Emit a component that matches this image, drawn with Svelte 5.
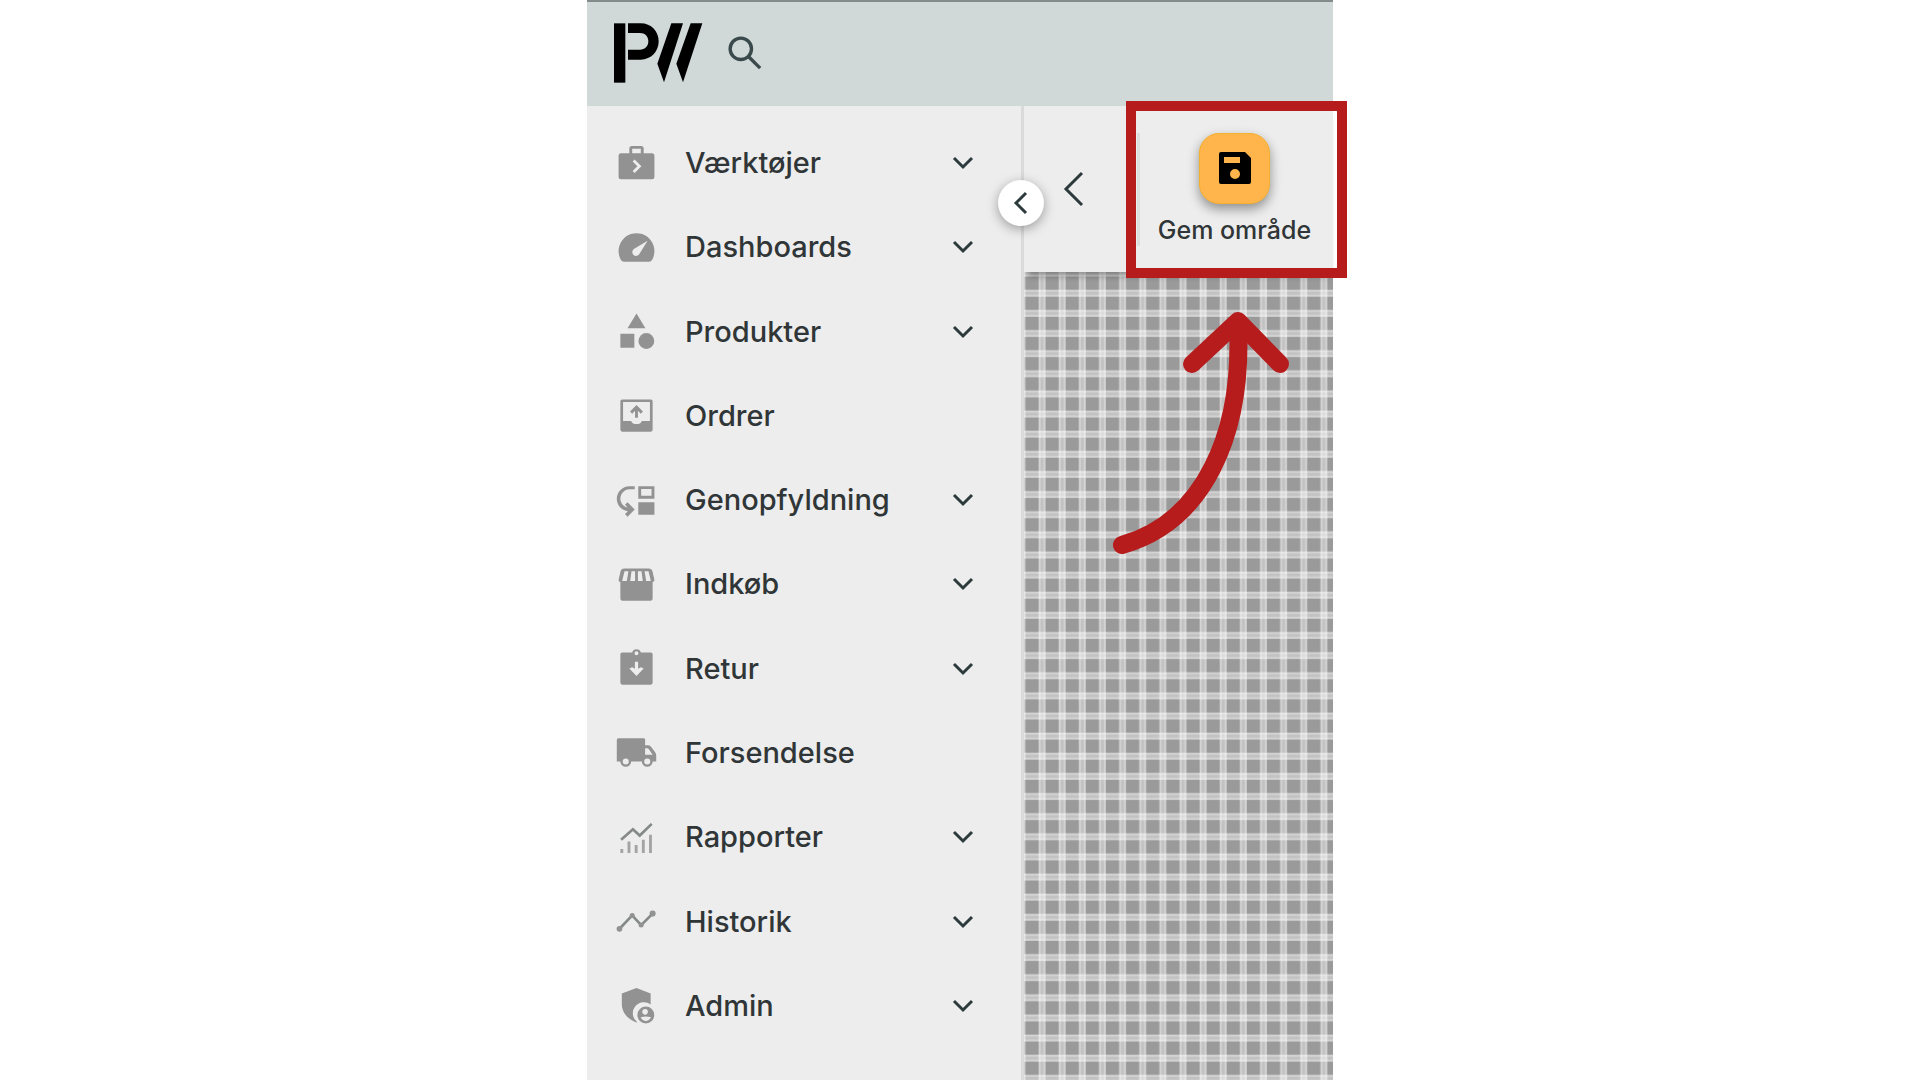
<script lang="ts">
    type MenuItem = { label: string; icon: string; expandable: boolean };

    const items: MenuItem[] = [
        { label: "Værktøjer", icon: "tools", expandable: true },
        { label: "Dashboards", icon: "gauge", expandable: true },
        { label: "Produkter", icon: "shapes", expandable: true },
        { label: "Ordrer", icon: "outbox", expandable: false },
        { label: "Genopfyldning", icon: "refill", expandable: true },
        { label: "Indkøb", icon: "store", expandable: true },
        { label: "Retur", icon: "return", expandable: true },
        { label: "Forsendelse", icon: "truck", expandable: false },
        { label: "Rapporter", icon: "report", expandable: true },
        { label: "Historik", icon: "history", expandable: true },
        { label: "Admin", icon: "shield", expandable: true },
    ];
</script>

{#snippet menuIcon(name: string)}
    <svg class="icon" viewBox="0 0 24 24" aria-hidden="true">
        {#if name === "tools"}
            <path fill-rule="evenodd" d="M8 6.3V3.6Q8 2.2 9.4 2.2h5.2Q16 2.2 16 3.6v2.7h4.6Q22 6.3 22 7.7v11.7q0 1.4-1.4 1.4H3.4Q2 20.8 2 19.4V7.7q0-1.4 1.4-1.4zM9.6 6.3h4.8V3.8H9.6z" />
            <path class="cut" d="M10.4 10.3l3.2 3.2-3.2 3.2" />
        {:else if name === "gauge"}
            <path fill-rule="evenodd" d="M12 4A10 10 0 0 0 3.34 19q.5 1 1.7 1h13.92q1.2 0 1.7-1A10 10 0 0 0 12 4zM18.2 8.2l-4.6 7.4a2.1 2.1 0 1 1-3.1-2.7z" />
        {:else if name === "shapes"}
            <path d="M12 2l-5 8.2h10zM3 13.2h7.8V21H3z" />
            <circle cx="17.5" cy="17.3" r="4.4" />
        {:else if name === "outbox"}
            <path fill-rule="evenodd" d="M4 3h16q1 0 1 1v16q0 1-1 1H4q-1 0-1-1V4q0-1 1-1zM4.5 4.5V15H9q.8 1.8 3 1.8t3-1.8h4.5V4.5z" />
            <path d="M11.2 13.2V9.4L9.6 11 8.4 9.8 12 6.2l3.6 3.6-1.2 1.2-1.6-1.6v3.8z" />
        {:else if name === "refill"}
            <path d="M3 11c0 2.45 1.76 4.47 4.08 4.91l-1.49-1.49L7 13l4 4.01L7 21l-1.41-1.41 1.58-1.58v-.06C3.7 17.54 1 14.58 1 11c0-3.87 3.13-7 7-7h3v1.7H8c-2.76 0-5 2.54-5 5.3z" />
            <path fill-rule="evenodd" d="M22 11V4h-9v7zm-1.6-1.6h-5.8V5.6h5.8zM13 13h9v7h-9z" />
        {:else if name === "store"}
            <path fill-rule="evenodd" d="M21.9 8.89l-1.05-4.37C20.63 3.62 19.85 3 18.94 3H5.05c-.9 0-1.69.63-1.9 1.52L2.1 8.89c-.24 1.02.1 1.61.9 1.61V20q0 1 1 1h16q1 0 1-1v-9.5c.8 0 1.15-.6.9-1.61zM18.7 4.6l1.3 5.4h-2.6L16.5 4.6zM12.8 4.6h2l.7 5.4h-2.7zM9.2 4.6h2V10H8.5zM5.3 4.6h2.2L6.6 10H4z" />
        {:else if name === "return"}
            <path fill-rule="evenodd" d="M20 3h-5.6a2.5 2.5 0 0 0-4.8 0H4Q3 3 3 4v16q0 1 1 1h16q1 0 1-1V4q0-1-1-1zM12 2.4a1.1 1.1 0 1 1 0 2.2 1.1 1.1 0 0 1 0-2.2zM11.1 8.2h1.8v4l1.5-.9 1.6.7-4 4.2L8 12l1.6-.7 1.5.9z" />
        {:else if name === "truck"}
            <path fill-rule="evenodd" d="M2 4h14q.8 0 .8.8V8h1.6q1 0 1.7.8l2.3 3.1q.6.8.6 1.8V17h-2a3 3 0 0 1-6 0H9a3 3 0 0 1-6 0H1V5q0-1 1-1zM16.8 9.6v3.6h4.2l-2.1-3q-.4-.6-1-.6zM6 15.3a1.7 1.7 0 1 0 0 3.4 1.7 1.7 0 0 0 0-3.4zM18 15.3a1.7 1.7 0 1 0 0 3.4 1.7 1.7 0 0 0 0-3.4z" />
        {:else if name === "report"}
            <path class="line" d="M3.4 13.3L10 7.4l3.8 3.5 6.7-6.5" />
            <path class="bars" d="M3.8 20.6v-2.2M7.8 20.6v-6.3M11.8 20.6v-4.4M15.8 20.6v-7.4M19.8 20.6V10.4" />
        {:else if name === "history"}
            <path class="line" d="M2.4 16.2l7.2-7.6 5 5.4 6.4-6.4" />
            <circle cx="2.5" cy="16.1" r="1.6" />
            <circle cx="9.6" cy="8.6" r="1.4" />
            <circle cx="14.6" cy="14" r="1.4" />
            <circle cx="21" cy="7.6" r="1.7" />
        {:else if name === "shield"}
            <path d="M12 2.3l7.9 3v6.1a5.9 5.9 0 0 0-7.5 9.9l-.4.2c-4.8-1.6-8.2-5.8-8.2-10.4V5.3z" />
            <path fill-rule="evenodd" d="M17.2 12.6a4.7 4.7 0 1 1 0 9.4 4.7 4.7 0 0 1 0-9.4zM17.2 14a1.6 1.6 0 1 0 0 3.1 1.6 1.6 0 0 0 0-3.1zM14.3 18.6q1.2 2.1 2.9 2.1t2.9-2.1q-2.9-1-5.8 0z" />
        {/if}
    </svg>
{/snippet}

<div class="stage">
    <header class="topbar">
        <a class="logo" href="#home" aria-label="PW">
            <svg viewBox="100 70 268 180" aria-hidden="true">
                <path d="M102 71h34v178h-34z" />
                <path d="M144 71h38c32 0 54 24 54 54s-22 55-54 55h-38v-30h36c15 0 25-10 25-25s-10-25-25-25h-36z" />
                <path d="M274 71h35l-57 177-20-56zM332 71h35l-58 177-20-56z" />
            </svg>
        </a>
        <button class="search" aria-label="Søg">
            <svg viewBox="0 0 24 24" aria-hidden="true">
                <circle cx="9.5" cy="9.5" r="5.7" />
                <path d="M13.7 13.7l6.1 6.1" />
            </svg>
        </button>
    </header>

    <div class="body">
        <aside class="sidebar">
            <nav>
                {#each items as item}
                    <button class="item" aria-expanded={item.expandable ? false : undefined}>
                        {@render menuIcon(item.icon)}
                        <span class="label">{item.label}</span>
                        {#if item.expandable}
                            <svg class="chevron" viewBox="0 0 24 24" aria-hidden="true">
                                <path d="M3 7l9 9 9-9" />
                            </svg>
                        {/if}
                    </button>
                {/each}
            </nav>
            <button class="collapse" aria-label="Skjul menu">
                <svg viewBox="0 0 24 24" aria-hidden="true">
                    <path d="M17 2L7 12l10 10" />
                </svg>
            </button>
        </aside>

        <main>
            <div class="toolbar">
                <button class="back" aria-label="Tilbage">
                    <svg viewBox="0 0 24 40" aria-hidden="true">
                        <path d="M20 4L4 20l16 16" />
                    </svg>
                </button>
                <div class="action">
                    <button class="save" aria-labelledby="save-label">
                        <svg viewBox="0 0 32 32" aria-hidden="true">
                            <path fill-rule="evenodd" d="M2 0h24l6 6v24q0 2-2 2H2q-2 0-2-2V2q0-2 2-2zM5 5v6h16V5zM16 17a5 5 0 1 0 0 10 5 5 0 0 0 0-10z" />
                        </svg>
                    </button>
                    <span id="save-label">Gem område</span>
                </div>
            </div>

            <!-- Floor plan grid -->
            <svg class="grid" aria-hidden="true">
                <defs>
                    <pattern id="plaid" x="1.5" y="4.7" width="20.13" height="20.13" patternUnits="userSpaceOnUse">
                        <rect width="21" height="21" fill="#9a9a9a" />
                        <g fill="#fff">
                            <rect x="13" width="7.13" height="21" opacity=".4" />
                            <rect x="13.4" width="1.6" height="21" opacity=".3" />
                            <rect x="18" width="1.6" height="21" opacity=".3" />
                            <rect y="13" width="21" height="7.13" opacity=".4" />
                            <rect y="13.4" width="21" height="1.6" opacity=".3" />
                            <rect y="18" width="21" height="1.6" opacity=".3" />
                        </g>
                    </pattern>
                </defs>
                <rect width="100%" height="100%" fill="url(#plaid)" />
            </svg>
        </main>
    </div>

    <!-- Callout on the save action -->
    <div class="callout"></div>
    <svg class="arrow" viewBox="0 0 180 250" aria-hidden="true">
        <path d="M12 235C94 212 133 124 128 16" />
        <path d="M82 54l46-43 42 43" />
    </svg>
</div>

<style>
    :global(body) {
        margin: 0;
        background: #fff;
    }

    .stage {
        position: relative;
        display: flex;
        flex-direction: column;
        width: 100%;
        max-width: 746px;
        min-height: 100vh;
        margin: 0 auto;
        font-family: "Inter", sans-serif;
        color: #303637;
    }

    button {
        margin: 0;
        padding: 0;
        border: 0;
        background: none;
        color: inherit;
        font: inherit;
        cursor: pointer;
    }

    svg {
        display: block;
    }

    .topbar {
        display: flex;
        align-items: center;
        gap: 20px;
        box-sizing: border-box;
        height: 106px;
        padding: 0 26px 2px;
        border-top: 2px solid #858a8a;
        background: #d0d9d8;
    }

    .logo svg {
        width: 90px;
        height: 60px;
        fill: #000;
    }

    .search svg {
        width: 45px;
        height: 45px;
        fill: none;
        stroke: #3a4a4c;
        stroke-width: 1.8;
    }

    .body {
        display: flex;
        flex: 1;
    }

    .sidebar {
        position: relative;
        z-index: 1;
        display: flex;
        box-sizing: border-box;
        width: 437px;
        border-right: 3px solid #dadada;
        background: #ededed;
    }

    nav {
        display: flex;
        flex: 1;
        flex-direction: column;
        padding: 15px 0 32px;
    }

    .item {
        display: flex;
        flex: 1;
        align-items: center;
        gap: 27px;
        padding: 0 46px 0 28px;
        font-size: 29px;
        font-weight: 500;
        line-height: 36px;
        text-align: left;
    }

    .icon {
        width: 43px;
        height: 43px;
        fill: #919291;
    }

    .icon .cut {
        fill: none;
        stroke: #ededed;
        stroke-width: 1.6;
    }

    .icon .line {
        fill: none;
        stroke: #858a88;
        stroke-width: 1.5;
    }

    .icon .bars {
        fill: none;
        stroke: #a3a3a3;
        stroke-width: 1.6;
    }

    .label {
        flex: 1;
    }

    .chevron {
        width: 24px;
        height: 24px;
    }

    .chevron path,
    .collapse path,
    .back path {
        fill: none;
        stroke: #2c3a3c;
        stroke-width: 3;
    }

    .collapse {
        position: absolute;
        top: 74px;
        right: -23px;
        display: flex;
        align-items: center;
        justify-content: center;
        width: 46px;
        height: 46px;
        border-radius: 50%;
        background: #fff;
        box-shadow: 0 3px 12px rgba(0, 0, 0, 0.35);
    }

    .collapse svg {
        width: 24px;
        height: 24px;
    }

    main {
        display: flex;
        flex: 1;
        flex-direction: column;
        min-width: 0;
    }

    .toolbar {
        position: relative;
        display: flex;
        align-items: center;
        height: 166px;
        background: #ededed;
        box-shadow: 0 8px 6px -4px rgba(0, 0, 0, 0.35);
    }

    .back {
        padding: 0 51px 0 38px;
    }

    .back svg {
        width: 24px;
        height: 40px;
    }

    .action {
        display: flex;
        flex: 1;
        flex-direction: column;
        align-items: center;
        gap: 10px;
        padding-right: 4px;
        border-left: 3px solid #dbdfde;
        font-size: 25px;
        font-weight: 500;
        line-height: 32px;
        white-space: nowrap;
    }

    .save {
        display: flex;
        align-items: center;
        justify-content: center;
        box-sizing: border-box;
        width: 71px;
        height: 71px;
        border: 1px solid #f5b02e;
        border-radius: 20px;
        background: #ffb54c;
        box-shadow: 0 5px 12px rgba(0, 0, 0, 0.4);
    }

    .save svg {
        width: 32px;
        height: 32px;
    }

    .grid {
        flex: 1;
        width: 100%;
    }

    .callout {
        position: absolute;
        top: 101px;
        left: 539px;
        box-sizing: border-box;
        width: 221px;
        height: 177px;
        border: 10px solid #b71c1c;
    }

    .arrow {
        position: absolute;
        top: 310px;
        left: 523px;
        width: 180px;
        height: 250px;
        fill: none;
        stroke: #b71c1c;
        stroke-width: 18;
        stroke-linecap: round;
        stroke-linejoin: round;
    }
</style>
